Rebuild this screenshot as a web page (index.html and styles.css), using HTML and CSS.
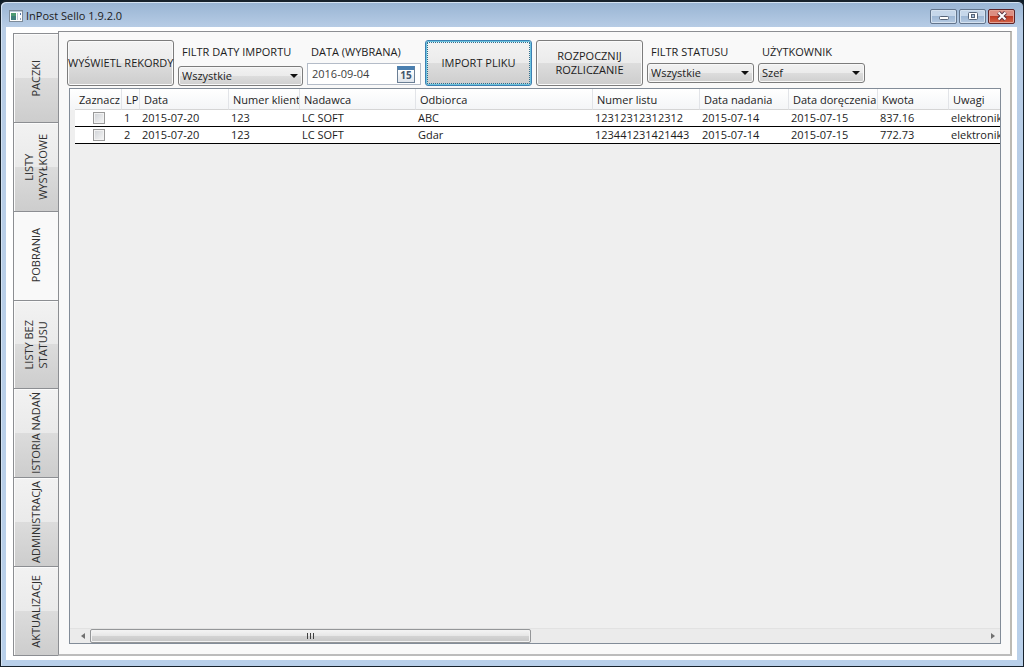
FILE: index.html
```html
<!DOCTYPE html>
<html lang="pl">
<head>
<meta charset="utf-8">
<title>InPost Sello 1.9.2.0</title>
<link rel="stylesheet" href="styles.css">
</head>
<body>
<div class="window">
  <header class="titlebar">
    <svg class="app-icon" viewBox="0 0 14 12" width="14" height="12" aria-hidden="true">
      <rect x="0.5" y="0.5" width="13" height="11" fill="#fdfdfd" stroke="#7d8b99"/>
      <rect x="1" y="1" width="12" height="1" fill="#b9c9d8"/>
      <rect x="2" y="3" width="5" height="7" fill="#3f7f7a"/>
      <rect x="2" y="3" width="5" height="3" fill="#4d9a70"/>
      <rect x="8" y="3" width="1" height="7" fill="#b8c4d0"/>
      <rect x="11" y="3" width="1" height="2" fill="#5574a8"/>
      <rect x="11" y="8" width="1" height="2" fill="#8ea2bd"/>
    </svg>
    <h1 class="title">InPost Sello 1.9.2.0</h1>
    <div class="window-buttons">
      <button class="win-btn" type="button" aria-label="Minimalizuj">
        <svg viewBox="0 0 12 10" width="12" height="10"><rect x="1.5" y="5.5" width="9" height="3" rx="1" fill="#fff" stroke="#566478"/></svg>
      </button>
      <button class="win-btn" type="button" aria-label="Maksymalizuj">
        <svg viewBox="0 0 12 10" width="12" height="10"><rect x="1.5" y="1.5" width="9" height="7" rx="1" fill="#fff" stroke="#566478"/><rect x="4.5" y="3.5" width="3" height="3" fill="#a9bfd9" stroke="#566478"/></svg>
      </button>
      <button class="win-btn win-close" type="button" aria-label="Zamknij">
        <svg viewBox="0 0 12 10" width="12" height="10"><path d="M2.5 1.5 L9.5 8.5 M9.5 1.5 L2.5 8.5" stroke="#5c3440" stroke-width="4"/><path d="M2.5 1.5 L9.5 8.5 M9.5 1.5 L2.5 8.5" stroke="#fff" stroke-width="2"/></svg>
      </button>
    </div>
  </header>
  <main class="client">
    <nav class="tabs" aria-label="Sekcje">
      <button class="tab" type="button"><span class="tab-text">PACZKI</span></button>
      <button class="tab" type="button"><span class="tab-text">LISTY<br>WYSYŁKOWE</span></button>
      <button class="tab tab-active" type="button"><span class="tab-text">POBRANIA</span></button>
      <button class="tab" type="button"><span class="tab-text">LISTY BEZ<br>STATUSU</span></button>
      <button class="tab" type="button"><span class="tab-text">ISTORIA NADAŃ</span></button>
      <button class="tab" type="button"><span class="tab-text">ADMINISTRACJA</span></button>
      <button class="tab" type="button"><span class="tab-text">AKTUALIZACJE</span></button>
    </nav>
    <section class="panel">
      <div class="toolbar">
        <button class="btn" type="button">WYŚWIETL REKORDY</button>
        <div class="field field-import">
          <label for="import">FILTR DATY IMPORTU</label>
          <div class="select"><select id="import"><option>Wszystkie</option></select></div>
        </div>
        <div class="field field-date">
          <label for="date">DATA (WYBRANA)</label>
          <div class="date">
            <input id="date" type="text" value="2016-09-04">
            <button class="cal" type="button" aria-label="Kalendarz"><span class="cal-day">15</span></button>
          </div>
        </div>
        <button class="btn btn-focus" type="button">IMPORT PLIKU</button>
        <button class="btn" type="button">ROZPOCZNIJ<br>ROZLICZANIE</button>
        <div class="field">
          <label for="status">FILTR STATUSU</label>
          <div class="select"><select id="status"><option>Wszystkie</option></select></div>
        </div>
        <div class="field">
          <label for="user">UŻYTKOWNIK</label>
          <div class="select"><select id="user"><option>Szef</option></select></div>
        </div>
      </div>
      <div class="grid">
        <div class="grid-view">
          <table class="records">
            <colgroup>
              <col class="c-check"><col class="c-no"><col class="c-date"><col class="c-short"><col class="c-sender"><col class="c-receiver"><col class="c-letter"><col class="c-date"><col class="c-date"><col class="c-short"><col class="c-date">
            </colgroup>
            <thead>
              <tr><th>Zaznacz</th><th>LP</th><th>Data</th><th>Numer klienta</th><th>Nadawca</th><th>Odbiorca</th><th>Numer listu</th><th>Data nadania</th><th>Data doręczenia</th><th>Kwota</th><th>Uwagi</th></tr>
            </thead>
            <tbody>
              <tr><td><input class="check" type="checkbox" aria-label="Zaznacz 1"></td><td>1</td><td>2015-07-20</td><td>123</td><td>LC SOFT</td><td>ABC</td><td>12312312312312</td><td>2015-07-14</td><td>2015-07-15</td><td>837.16</td><td>elektronika</td></tr>
              <tr><td><input class="check" type="checkbox" aria-label="Zaznacz 2"></td><td>2</td><td>2015-07-20</td><td>123</td><td>LC SOFT</td><td>Gdar</td><td>123441231421443</td><td>2015-07-14</td><td>2015-07-15</td><td>772.73</td><td>elektronika</td></tr>
            </tbody>
          </table>
        </div>
        <div class="scrollbar">
          <button class="arrow arrow-left" type="button" aria-label="W lewo"></button>
          <div class="track"><div class="thumb"><i></i><i></i><i></i></div></div>
          <button class="arrow arrow-right" type="button" aria-label="W prawo"></button>
        </div>
      </div>
    </section>
  </main>
</div>
</body>
</html>
```
FILE: styles.css
```css
* {
  box-sizing: border-box;
}

body {
  margin: 0;
  background: #0c1c28;
  color: #1c1c1c;
  font: 11px/14px "Open Sans", "Noto Sans", sans-serif;
}

button,
input,
select {
  margin: 0;
  padding: 0;
  font: inherit;
  color: inherit;
}

.window {
  display: flex;
  flex-direction: column;
  height: 100vh;
  padding: 0 6px 6px 5px;
  border: 1px solid #17222c;
  border-top-width: 2px;
  border-radius: 6px 6px 0 0;
  background: linear-gradient(180deg, #98b4d3 0, #b8cde6 26px, #b9d0ea 100%);
  box-shadow: inset 1px 1px 0 #d5e3f2;
}

.titlebar {
  display: flex;
  align-items: center;
  flex: none;
  height: 25px;
  padding: 3px 2px 0 3px;
}

.title {
  flex: 1;
  margin: 0 0 0 3px;
  font-size: 11px;
  font-weight: 400;
  line-height: 14px;
}

.window-buttons {
  display: flex;
  gap: 2px;
}

.win-btn {
  display: flex;
  align-items: center;
  justify-content: center;
  width: 27px;
  height: 15px;
  border: 1px solid #63758c;
  border-radius: 2px;
  background: linear-gradient(#c6d7ea 50%, #9fb8d5 50%, #b5cae2);
  box-shadow: inset 0 0 0 1px #d5e2f0;
}

.win-close {
  border-color: #5f2428;
  background: linear-gradient(#dc8e82 50%, #bf3a24 50%, #d3654a);
  box-shadow: inset 0 0 0 1px #e3a497;
}

.client {
  display: flex;
  flex: 1;
  min-height: 0;
  padding: 4px 5px 4px 7px;
  background: #fff;
}

.tabs {
  display: flex;
  flex-direction: column;
  flex: none;
  width: 45px;
  padding-top: 2px;
}

.tab {
  display: flex;
  align-items: center;
  justify-content: center;
  flex: 1;
  min-height: 0;
  border: 1px solid #8c8e92;
  border-top-width: 0;
  border-right-width: 0;
  background: linear-gradient(#f2f2f2, #eaeaea 50%, #dcdcdc 50%, #cdcdcd);
  box-shadow: inset 1px 1px 0 #fbfbfb;
  color: #303030;
}

.tab:first-child {
  border-top-width: 1px;
}

.tab-active {
  background: #f9f9f9;
}

.tab-text {
  writing-mode: vertical-rl;
  transform: rotate(180deg);
  white-space: nowrap;
  text-align: center;
}

.panel {
  display: flex;
  flex-direction: column;
  flex: 1;
  min-width: 0;
  padding: 8px 9px 10px 10px;
  border: 1px solid #8c8e92;
  border-right: 2px solid #bcbab4;
  border-bottom: 2px solid #bcbcbc;
  background: #f9f9f9;
}

.toolbar {
  display: flex;
  flex: none;
  gap: 4px;
  margin: 0 0 2px -2px;
}

.btn {
  flex: none;
  width: 107px;
  height: 46px;
  border: 1px solid #7c7c7c;
  border-radius: 3px;
  background: linear-gradient(#f3f3f3, #ebebeb 50%, #dddddd 50%, #cdcdcd);
  box-shadow: inset 0 0 0 1px #fafafa;
  white-space: nowrap;
}

.btn-focus {
  border-color: #3c7fb1;
  outline: 1px dotted #2f6f8e;
  outline-offset: -3px;
  box-shadow: inset 0 0 0 1px #6cc4e0;
}

.field {
  display: flex;
  flex-direction: column;
  flex: none;
  width: 107px;
  padding-top: 5px;
}

.field label {
  margin: 0 0 4px 4px;
  white-space: nowrap;
}

.field-import {
  width: 125px;
}

.field-import label {
  margin-bottom: 7px;
}

.field-date {
  width: 114px;
}

.select {
  position: relative;
}

.select::after {
  content: "";
  position: absolute;
  top: 8px;
  right: 5px;
  border: 4px solid transparent;
  border-top-color: #101010;
  border-bottom-width: 0;
  pointer-events: none;
}

.select select {
  display: block;
  width: 100%;
  height: 20px;
  padding-left: 3px;
  border: 1px solid #7c7c7c;
  border-radius: 3px;
  appearance: none;
  background: linear-gradient(#f2f2f2, #ebebeb 50%, #dddddd 50%, #cfcfcf);
  box-shadow: inset 0 0 0 1px #f8f8f8;
}

.date {
  display: flex;
  align-items: center;
  height: 22px;
  padding: 0 5px 0 4px;
  border: 1px solid #b4bcc8;
  background: #fff;
}

.date input {
  flex: 1;
  min-width: 0;
  border: 0;
  background: none;
  color: #404040;
}

.cal {
  display: flex;
  align-items: center;
  justify-content: center;
  width: 18px;
  height: 17px;
  border: 1px solid #6b7f95;
  border-top: 4px solid #4a7fb0;
  background: linear-gradient(#ffffff, #dfe5ec);
}

.cal-day {
  font-size: 10px;
  font-weight: 700;
  line-height: 11px;
  color: #44566c;
}

.grid {
  display: flex;
  flex-direction: column;
  flex: 1;
  min-height: 0;
  border: 1px solid #828c98;
  background: #efefef;
}

.grid-view {
  flex: 1;
  min-height: 0;
  overflow: hidden;
  background: linear-gradient(#ffffff, #f4f5f7) 0 0 / 100% 21px no-repeat;
}

.records {
  width: 960px;
  margin-left: 5px;
  border-collapse: separate;
  border-spacing: 0;
  table-layout: fixed;
}

.c-check { width: 47px; }
.c-no { width: 18px; }
.c-date { width: 89px; }
.c-short { width: 71px; }
.c-sender { width: 116px; }
.c-receiver { width: 177px; }
.c-letter { width: 107px; }

.records th,
.records td {
  padding: 0 0 0 2px;
  overflow: hidden;
  font-weight: 400;
  text-align: left;
  white-space: nowrap;
}

.records th {
  height: 21px;
  padding: 2px 0 0 4px;
  border-right: 1px solid #e2e4e8;
  border-bottom: 1px solid #d5d5d5;
  background: linear-gradient(#ffffff, #f4f5f7);
}

.records td {
  height: 17px;
  border-bottom: 1px solid #000;
  background: #fff;
}

.records td:first-child {
  padding: 0;
  text-align: center;
}

.check {
  display: block;
  width: 12px;
  height: 12px;
  margin: 0 auto;
  border: 1px solid #9a9a9a;
  appearance: none;
  background: linear-gradient(135deg, #cfd2d6, #f6f6f6);
  box-shadow: inset 0 0 0 1px #f2f2f2;
}

.check:checked {
  background: #4a5a70;
}

.scrollbar {
  display: flex;
  align-items: center;
  flex: none;
  height: 15px;
  padding-left: 5px;
  border-top: 1px solid #e2e2e2;
  background: #ebebeb;
}

.arrow {
  display: flex;
  align-items: center;
  justify-content: center;
  flex: none;
  width: 15px;
  height: 14px;
  border: 0;
  background: none;
}

.arrow::before {
  content: "";
  border: 3px solid transparent;
}

.arrow-left::before {
  border-right: 4px solid #707070;
  border-left-width: 0;
}

.arrow-right::before {
  border-left: 4px solid #707070;
  border-right-width: 0;
}

.track {
  flex: 1;
}

.thumb {
  display: flex;
  align-items: center;
  justify-content: center;
  gap: 2px;
  width: 49.3%;
  height: 14px;
  border: 1px solid #949698;
  border-radius: 2px;
  background: linear-gradient(#f4f4f4, #e6e6e6 50%, #d4d4d4 50%, #c6c6c6);
  box-shadow: inset 0 0 0 1px #f2f2f2;
}

.thumb i {
  width: 1px;
  height: 6px;
  background: #404040;
}
```
